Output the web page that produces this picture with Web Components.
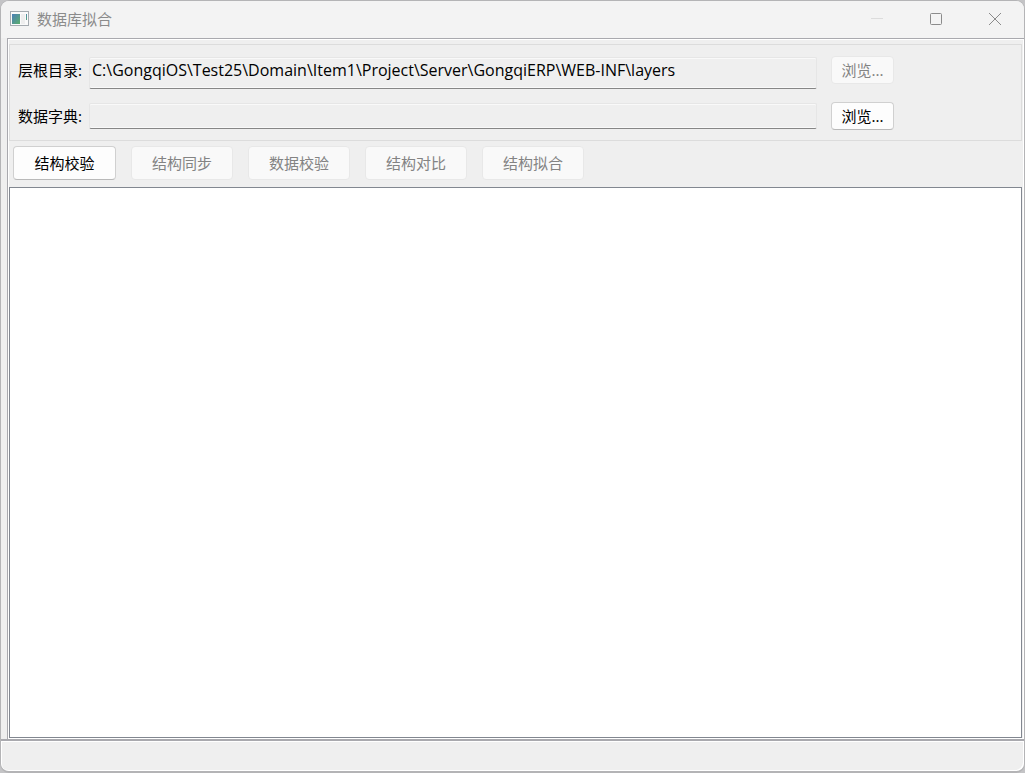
<!DOCTYPE html>
<html lang="zh-CN">
<head>
<meta charset="utf-8">
<title>数据库拟合</title>
<style>
  body {
    margin: 0;
    background: #c4c4c6;
    color: #000;
    font: 15px/20px "Noto Sans", "Noto Sans CJK SC", sans-serif;
  }
</style>
</head>
<body>
<app-window caption="数据库拟合">
  <field-group>
    <path-field label="层根目录:" value="C:\GongqiOS\Test25\Domain\Item1\Project\Server\GongqiERP\WEB-INF\layers" size="tall" locked></path-field>
    <path-field label="数据字典:" value=""></path-field>
  </field-group>
  <tool-bar>
    <tool-button>结构校验</tool-button>
    <tool-button disabled>结构同步</tool-button>
    <tool-button disabled>数据校验</tool-button>
    <tool-button disabled>结构对比</tool-button>
    <tool-button disabled>结构拟合</tool-button>
  </tool-bar>
  <output-pane></output-pane>
</app-window>

<script>
const buttonStyles = `
  button {
    box-sizing: border-box;
    margin: 0;
    border: 1px solid #d0d0d0;
    border-bottom-color: #b9b9b9;
    border-radius: 4px;
    background: #fdfdfd;
    color: #000;
    font: inherit;
    white-space: nowrap;
  }
  button:disabled {
    border-color: #e8e8e8;
    background: #f9f9f9;
    color: #838383;
  }
`;

class AppWindow extends HTMLElement {
  constructor() {
    super();
    const shadowRoot = this.attachShadow({ mode: 'open' });
    shadowRoot.innerHTML = `
    <style>
      :host {
        box-sizing: border-box;
        display: flex;
        flex-direction: column;
        height: 100vh;
        overflow: hidden;
        border: 1px solid #b4b4b6;
        border-bottom-width: 2px;
        border-radius: 9px;
        background: #efefef;
      }
      header {
        box-sizing: border-box;
        display: flex;
        align-items: center;
        height: 37px;
        padding: 0 0 2px 9px;
        background: #f3f3f3;
        color: #8b8b8b;
      }
      h1 {
        flex: 1;
        margin: 0 0 0 7px;
        font: inherit;
        line-height: 16px;
      }
      nav {
        display: flex;
      }
      nav button {
        display: grid;
        place-items: center;
        width: 59px;
        height: 34px;
        padding: 0;
        border: 0;
        background: none;
        color: #8b8b8b;
      }
      nav button:disabled {
        color: #dcdcdc;
      }
      svg {
        display: block;
      }
      main {
        display: flex;
        flex: 1;
        flex-direction: column;
        min-height: 0;
        margin-left: 6px;
        padding: 4px 0 0;
        border: 1px solid #a9a9ae;
        border-width: 1px 0 0 1px;
        box-shadow: inset 1px 1px #fff, inset -1px -1px #fff;
      }
      .content {
        display: flex;
        flex: 1;
        flex-direction: column;
        min-height: 0;
        margin: 1px 2px 1px 1px;
      }
      footer {
        height: 30px;
        border-top: 2px solid #a9a9ae;
        border-radius: 0 0 8px 8px;
        box-shadow: inset 1px 1px #fff, inset -1px -1px #fff;
      }
    </style>
    <header>
      <svg width="20" height="16" viewBox="0 0 20 16" aria-hidden="true">
        <defs>
          <linearGradient id="pane" x1="0" y1="0" x2="1" y2="1">
            <stop offset="0" stop-color="#4b7fb8"></stop>
            <stop offset="1" stop-color="#5bae6c"></stop>
          </linearGradient>
        </defs>
        <rect x="0.5" y="0.5" width="18" height="14" fill="#fafafa" stroke="#a5abb0"></rect>
        <rect x="2" y="3" width="8" height="10" fill="url(#pane)"></rect>
        <rect x="11" y="3" width="4" height="10" fill="#eeeeee"></rect>
        <rect x="16" y="3" width="1" height="6" fill="url(#pane)"></rect>
      </svg>
      <h1></h1>
      <nav>
        <button type="button" aria-label="最小化" disabled>
          <svg width="12" height="12" stroke="currentColor"><path d="M0 5.5H12"></path></svg>
        </button>
        <button type="button" aria-label="最大化">
          <svg width="12" height="12" fill="none" stroke="currentColor"><rect x="0.5" y="0.5" width="11" height="11" rx="1"></rect></svg>
        </button>
        <button type="button" aria-label="关闭">
          <svg width="12" height="12" stroke="currentColor"><path d="M0 0L12 12M12 0L0 12"></path></svg>
        </button>
      </nav>
    </header>
    <main><div class="content"><slot></slot></div></main>
    <footer></footer>`;
    shadowRoot.querySelector('h1').textContent = this.getAttribute('caption');
  }
}

class FieldGroup extends HTMLElement {
  constructor() {
    super();
    const shadowRoot = this.attachShadow({ mode: 'open' });
    shadowRoot.innerHTML = `
    <style>
      :host {
        display: grid;
        row-gap: 13px;
        padding: 11px 127px 10px 8px;
        border: 1px solid #dcdcdc;
      }
    </style>
    <slot></slot>`;
  }
}

class PathField extends HTMLElement {
  constructor() {
    super();
    const shadowRoot = this.attachShadow({ mode: 'open' });
    shadowRoot.innerHTML = `
    <style>
      ${buttonStyles}
      :host {
        display: grid;
        grid-template-columns: 64px 1fr 63px;
        align-items: start;
      }
      label {
        line-height: 28px;
        white-space: nowrap;
      }
      input {
        box-sizing: border-box;
        min-width: 0;
        height: 26px;
        margin: 1px 14px 0 7px;
        padding: 0 2px;
        border: 1px solid #e6e6e6;
        border-bottom-color: #868686;
        border-radius: 2px;
        outline: 0;
        background: #efefef;
        box-shadow: inset 0 1px #f9f9f9, inset 0 -1px #f9f9f9;
        color: #000;
        font: 16px "Open Sans", sans-serif;
      }
      :host([size="tall"]) input {
        height: 32px;
        padding-bottom: 6px;
      }
      button {
        height: 28px;
        padding: 0;
      }
    </style>
    <label for="path"></label>
    <input id="path" type="text" readonly>
    <button type="button">浏览...</button>`;
    shadowRoot.querySelector('label').textContent = this.getAttribute('label');
    shadowRoot.querySelector('input').value = this.getAttribute('value');
    shadowRoot.querySelector('button').disabled = this.hasAttribute('locked');
  }
}

class ToolBar extends HTMLElement {
  constructor() {
    super();
    const shadowRoot = this.attachShadow({ mode: 'open' });
    shadowRoot.innerHTML = `
    <style>
      :host {
        display: flex;
        gap: 15px;
        padding: 5px 4px 7px;
      }
    </style>
    <slot></slot>`;
  }
}

class ToolButton extends HTMLElement {
  constructor() {
    super();
    const shadowRoot = this.attachShadow({ mode: 'open' });
    shadowRoot.innerHTML = `
    <style>
      ${buttonStyles}
      :host {
        display: block;
      }
      button {
        height: 34px;
        padding: 0 20px;
      }
      button:enabled {
        min-width: 103px;
      }
    </style>
    <button type="button"><slot></slot></button>`;
    shadowRoot.querySelector('button').disabled = this.hasAttribute('disabled');
  }
}

class OutputPane extends HTMLElement {
  constructor() {
    super();
    const shadowRoot = this.attachShadow({ mode: 'open' });
    shadowRoot.innerHTML = `
    <style>
      :host {
        display: flex;
        flex: 1;
        min-height: 0;
      }
      textarea {
        box-sizing: border-box;
        flex: 1;
        margin: 0;
        padding: 4px;
        border: 1px solid #828790;
        outline: 0;
        background: #fff;
        font: inherit;
        resize: none;
      }
    </style>
    <textarea aria-label="输出" readonly></textarea>`;
  }
}

customElements.define('app-window', AppWindow);
customElements.define('field-group', FieldGroup);
customElements.define('path-field', PathField);
customElements.define('tool-bar', ToolBar);
customElements.define('tool-button', ToolButton);
customElements.define('output-pane', OutputPane);
</script>
</body>
</html>
